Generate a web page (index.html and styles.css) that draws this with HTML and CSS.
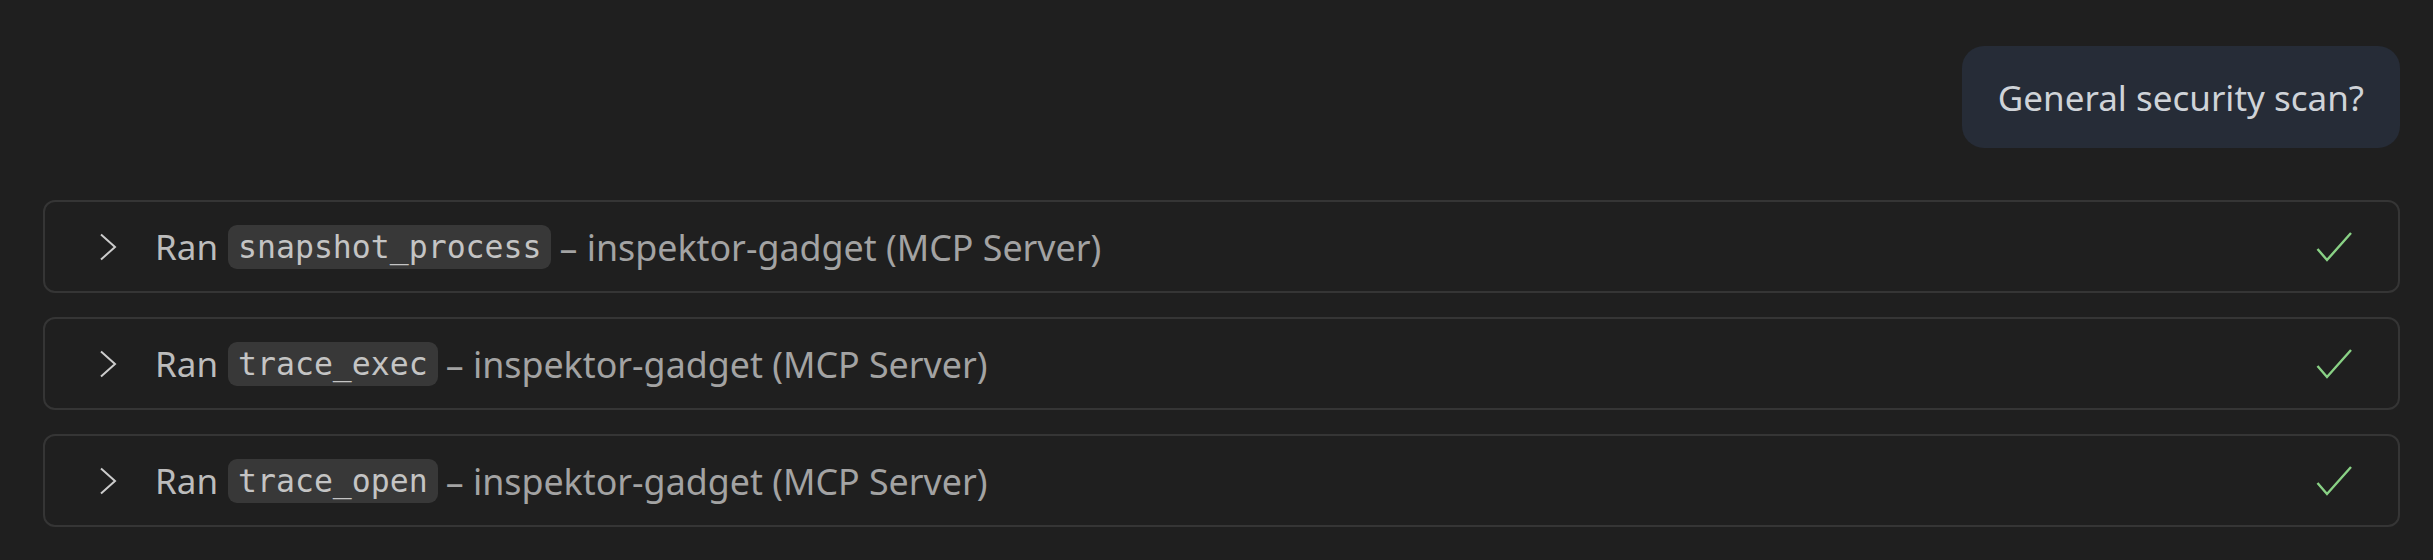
FILE: index.html
```html
<!DOCTYPE html>
<html>
<head>
<meta charset="utf-8">
<link rel="stylesheet" href="styles.css">
</head>
<body>
<div class="chat">
  <div class="user-row">
    <div class="bubble">General security scan?</div>
  </div>
  <div class="tools">
    <div class="tool">
      <svg class="chev" viewBox="0 0 18 28" width="18" height="28"><path d="M2 1.5 L16 14 L2 26.5" fill="none" stroke="#cccccc" stroke-width="2"/></svg>
      <span class="label"><span class="ran">Ran</span><code class="pill">snapshot_process</code><span class="rest">– inspektor-gadget (MCP Server)</span></span>
      <svg class="check" viewBox="0 0 36 30" width="36" height="30"><path d="M1.5 17 L11 28 L35 1" fill="none" stroke="#89d185" stroke-width="2.4"/></svg>
    </div>
    <div class="tool">
      <svg class="chev" viewBox="0 0 18 28" width="18" height="28"><path d="M2 1.5 L16 14 L2 26.5" fill="none" stroke="#cccccc" stroke-width="2"/></svg>
      <span class="label"><span class="ran">Ran</span><code class="pill">trace_exec</code><span class="rest">– inspektor-gadget (MCP Server)</span></span>
      <svg class="check" viewBox="0 0 36 30" width="36" height="30"><path d="M1.5 17 L11 28 L35 1" fill="none" stroke="#89d185" stroke-width="2.4"/></svg>
    </div>
    <div class="tool">
      <svg class="chev" viewBox="0 0 18 28" width="18" height="28"><path d="M2 1.5 L16 14 L2 26.5" fill="none" stroke="#cccccc" stroke-width="2"/></svg>
      <span class="label"><span class="ran">Ran</span><code class="pill">trace_open</code><span class="rest">– inspektor-gadget (MCP Server)</span></span>
      <svg class="check" viewBox="0 0 36 30" width="36" height="30"><path d="M1.5 17 L11 28 L35 1" fill="none" stroke="#89d185" stroke-width="2.4"/></svg>
    </div>
  </div>
</div>
</body>
</html>
```
FILE: styles.css
```css
html, body {
  margin: 0;
  padding: 0;
  background: #1f1f1f;
}
body {
  font-family: "Noto Sans", "Open Sans", sans-serif;
  color: #b4b4b4;
}
.chat {
  padding: 46px 33px 0 43px;
}
.user-row {
  display: flex;
  justify-content: flex-end;
}
.bubble {
  background: #262c37;
  color: #cfd3d8;
  border-radius: 22px;
  height: 102px;
  box-sizing: border-box;
  padding: 0 36px;
  display: flex;
  align-items: center;
  font-size: 35px;
}
.tools {
  margin-top: 52px;
  display: flex;
  flex-direction: column;
  gap: 24px;
}
.tool {
  height: 93px;
  box-sizing: border-box;
  border: 2px solid #353535;
  border-radius: 12px;
  display: flex;
  align-items: center;
  padding: 0 46px 0 54px;
}
.chev {
  flex: none;
}
.label {
  margin-left: 38px;
  font-size: 35px;
  white-space: nowrap;
  flex: 1;
  display: flex;
  align-items: center;
}
.ran {
  color: #bcbcbc;
}
.pill {
  font-family: "DejaVu Sans Mono", monospace;
  font-size: 31.5px;
  background: #383838;
  color: #c4c4c4;
  border-radius: 9px;
  padding: 0 10px;
  height: 44px;
  line-height: 44px;
  margin: 0 8px 0 10px;
}
.rest {
  color: #a3a3a3;
  font-size: 35.8px;
}
.check {
  flex: none;
}
```
